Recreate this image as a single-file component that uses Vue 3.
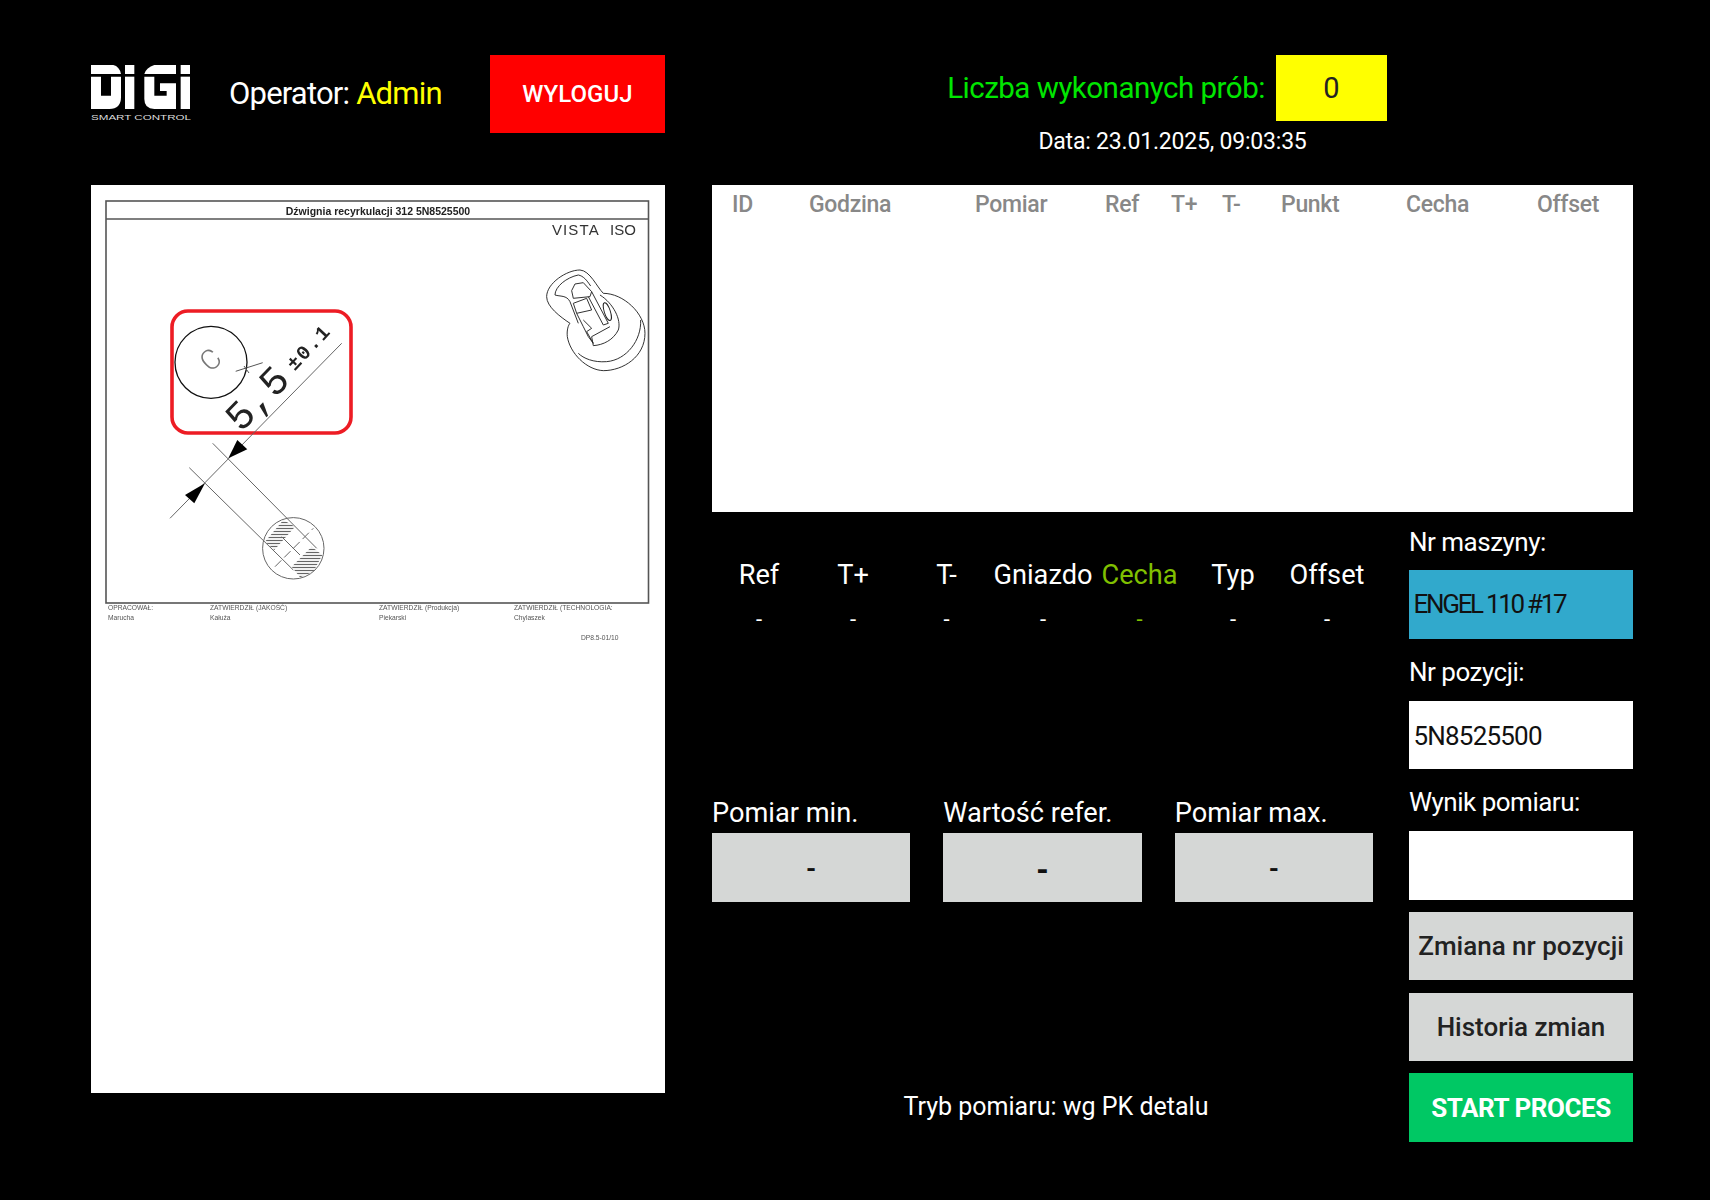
<script setup>
const tableCols = [
  { label: 'ID', w: 77 },
  { label: 'Godzina', w: 166 },
  { label: 'Pomiar', w: 130 },
  { label: 'Ref', w: 66 },
  { label: 'T+', w: 51 },
  { label: 'T-', w: 59 },
  { label: 'Punkt', w: 125 },
  { label: 'Cecha', w: 131 },
  { label: 'Offset', w: 95 }
]
const params = [
  { label: 'Ref' },
  { label: 'T+' },
  { label: 'T-' },
  { label: 'Gniazdo' },
  { label: 'Cecha', accent: true },
  { label: 'Typ' },
  { label: 'Offset' }
]
const measures = [
  { label: 'Pomiar min.' },
  { label: 'Wartość refer.', strong: true },
  { label: 'Pomiar max.' }
]
const signoffs = [
  { x: 17, role: 'OPRACOWAŁ:', name: 'Marucha' },
  { x: 119, role: 'ZATWIERDZIŁ (JAKOŚĆ)', name: 'Kałuża' },
  { x: 288, role: 'ZATWIERDZIŁ (Produkcja)', name: 'Piekarski' },
  { x: 423, role: 'ZATWIERDZIŁ (TECHNOLOGIA:', name: 'Chylaszek' }
]
</script>

<template>
  <div class="screen">
    <header class="top">
      <div class="top-left">
        <svg class="logo" viewBox="0 0 100 57" aria-label="DIGI Smart Control">
          <g fill="#fff" transform="scale(0.3333) translate(-35,-38)">
            <path d="M35 38H102Q120 42 125 65H35Z" />
            <path d="M35 73H65V130H95V73H125V135Q125 170 90 170H35Z" />
            <path d="M137 38H165V65H137Z" />
            <path d="M137 73H165V170H137Z" />
            <path d="M225 38H290V65H195Q201 45 225 38Z" />
            <path d="M195 73H225V130H262V116H242V93H290V170H225Q195 170 195 140Z" />
            <path d="M304 38H332V65H304Z" />
            <path d="M304 73H332V170H304Z" />
          </g>
          <text x="0" y="54.5" class="logo-sub" textLength="100" lengthAdjust="spacingAndGlyphs">SMART CONTROL</text>
        </svg>
        <div class="operator">Operator: <span class="yellow">Admin</span></div>
        <button class="logout">WYLOGUJ</button>
      </div>
      <div class="top-right">
        <div class="count-row">
          <span class="count-label">Liczba wykonanych prób:</span>
          <span class="count-value">0</span>
        </div>
        <div class="date">Data: 23.01.2025, 09:03:35</div>
      </div>
    </header>

    <main class="body">
      <section class="doc">
        <svg viewBox="0 0 574 908" width="574" height="908">
          <defs>
            <pattern id="hatch" width="3" height="3" patternUnits="userSpaceOnUse">
              <path d="M0 1.5H3" stroke="#666" stroke-width="1.2" />
            </pattern>
          </defs>
          <g fill="none" stroke="#555" stroke-width="1.6">
            <rect x="15" y="16" width="542.5" height="402" />
            <path d="M15 34H557.5" />
          </g>
          <text x="287" y="30" text-anchor="middle" class="doc-title">Dźwignia recyrkulacji 312 5N8525500</text>
          <text y="50" class="vista"><tspan x="461" class="vista-a">VISTA</tspan><tspan x="519">ISO</tspan></text>

          <rect x="81" y="126" width="179" height="122" rx="16" fill="none" stroke="#ed1c24" stroke-width="3.6" />
          <circle cx="120" cy="177.3" r="36" fill="none" stroke="#111" stroke-width="1.3" />
          <text class="cad-c" transform="translate(126 182) rotate(-42)" text-anchor="middle">C</text>
          <path d="M144.7 186.3L171.7 177.7M153 181L158 188" fill="none" stroke="#555" stroke-width="1" />
          <path d="M250.7 158.3L79 333.3" fill="none" stroke="#666" stroke-width="1" />
          <text class="cad-big" transform="translate(150 248) rotate(-45.5)">5,5</text>
          <text class="cad-tol" transform="translate(203.7 186.6) rotate(-47)" textLength="53" lengthAdjust="spacing">±0.1</text>
          <path d="M137.3 273.3L146.3 255L156.3 264.3Z" fill="#000" />
          <path d="M114 298.3L94 310L103.3 318.3Z" fill="#000" />

          <polygon points="174,356.7 192.3,335 204,341.7 183.3,365" fill="url(#hatch)" />
          <polygon points="200.7,381.7 220.7,361.7 231.3,370 222.3,386.7 209,392.3" fill="url(#hatch)" />
          <g fill="none" stroke="#666" stroke-width="1">
            <path d="M121.7 258.3L225.7 363.3" />
            <path d="M98.3 282.7L202.3 385" />
            <path d="M190.7 351.7L209 370" />
            <path d="M184 381.7L222.3 343.3" stroke-dasharray="9 4" />
            <circle cx="202.3" cy="363.3" r="30.7" />
          </g>

          <g fill="none" stroke="#222" stroke-width="2.8" transform="translate(279 -5) scale(0.3333)">
            <path d="M600 430C570 410 530 380 530 350C530 310 590 270 630 270C660 272 680 320 700 340" />
            <path d="M700 340C760 340 825 400 825 460C825 530 760 572 700 572C650 570 600 520 592 470C590 450 595 435 600 430" />
            <path d="M812 420C815 480 770 540 710 545C670 548 640 535 625 520" />
            <path d="M555 345C555 320 590 292 625 285C640 288 650 300 662 318" />
            <path d="M555 345C570 350 590 345 600 365L625 430" />
            <path d="M690 345C730 370 755 420 745 450C730 480 700 495 670 497" />
            <path d="M605 332L615 312L640 308L665 335L660 350L610 355Z" />
            <path d="M610 370L650 355L665 390L620 400Z" />
            <path d="M620 400L640 440L655 470L670 490L650 455L665 445L640 420" />
            <path d="M665 335L715 430L700 435L655 350" />
            <ellipse cx="712" cy="395" rx="9" ry="28" transform="rotate(-18 712 395)" />
            <path d="M670 497L665 470L720 440" />
          </g>

          <g v-for="s in signoffs" :key="s.x" class="signoff">
            <text :x="s.x" y="425">{{ s.role }}</text>
            <text :x="s.x" y="435">{{ s.name }}</text>
          </g>
          <text x="490" y="455" class="signoff-code">DP8.5-01/10</text>
        </svg>
      </section>

      <section class="work">
        <div class="table">
          <div class="thead">
            <span v-for="c in tableCols" :key="c.label" class="th" :style="{ width: c.w + 'px' }">{{ c.label }}</span>
          </div>
        </div>

        <div class="lower">
          <div class="lower-main">
            <div class="params">
              <div v-for="p in params" :key="p.label" class="param" :class="{ accent: p.accent }">
                <div class="param-label">{{ p.label }}</div>
                <div class="param-value">-</div>
              </div>
            </div>

            <div class="measures">
              <div v-for="m in measures" :key="m.label" class="measure">
                <div class="measure-label">{{ m.label }}</div>
                <div class="measure-box" :class="{ strong: m.strong }">-</div>
              </div>
            </div>

            <div class="mode">Tryb pomiaru: wg PK detalu</div>
          </div>

          <aside class="side">
            <div class="side-label first">Nr maszyny:</div>
            <div class="field blue">ENGEL 110 #17</div>
            <div class="side-label">Nr pozycji:</div>
            <div class="field white short">5N8525500</div>
            <div class="side-label">Wynik pomiaru:</div>
            <div class="field white"></div>
            <button class="btn gray">Zmiana nr pozycji</button>
            <button class="btn gray second">Historia zmian</button>
            <button class="btn green">START PROCES</button>
          </aside>
        </div>
      </section>
    </main>
  </div>
</template>

<style>
html, body { background: #000; margin: 0; }
</style>

<style scoped>
.screen {
  width: 1710px;
  height: 1200px;
  box-sizing: border-box;
  padding: 55px 77px 0 91px;
  background: #000;
  color: #fff;
  font-family: Roboto, "Liberation Sans", sans-serif;
}
.top { display: flex; height: 130px; gap: 47px; }
.top-left { width: 574px; display: flex; align-items: flex-start; }
.logo { width: 100px; height: 57px; margin-top: 10px; flex: none; }
.logo-sub { font: 400 7px "Liberation Sans", sans-serif; fill: #ddd; }
.operator { margin-left: 38px; font-size: 31px; letter-spacing: -0.8px; line-height: 66px; margin-top: 6px; white-space: nowrap; }
.yellow { color: #ff0; }
.logout {
  margin-left: auto;
  width: 175px;
  height: 78px;
  border: 0;
  padding: 0;
  background: #f00;
  color: #fff;
  font: 500 24px Roboto, sans-serif;
  letter-spacing: 0.1px;
}
.top-right { width: 921px; display: flex; flex-direction: column; align-items: center; }
.count-row { display: flex; align-items: center; gap: 11px; padding-right: 11px; }
.count-label { color: #00e600; font-size: 29.5px; letter-spacing: -0.5px; white-space: nowrap; }
.count-value {
  width: 111px;
  height: 66px;
  background: #ff0;
  color: #222;
  font-size: 29px;
  display: flex;
  align-items: center;
  justify-content: center;
}
.date { font-size: 23px; letter-spacing: -0.2px; line-height: 30px; margin-top: 6px; }

.body { display: flex; gap: 47px; }
.doc { width: 574px; height: 908px; background: #fff; flex: none; }
.doc svg { display: block; filter: blur(0.35px); }
.doc-title { font: 700 10.5px "Liberation Sans", sans-serif; fill: #222; }
.vista { font: 400 15px "Liberation Sans", sans-serif; fill: #333; }
.vista-a { letter-spacing: 1.1px; }
.cad-c { font: 300 28px Roboto, sans-serif; fill: #777; }
.cad-big { font: 400 40px "Liberation Mono", monospace; fill: #222; }
.cad-tol { font: 700 20px "Liberation Mono", monospace; fill: #222; }
.signoff text { font: 400 6.7px "Liberation Sans", sans-serif; fill: #555; }
.signoff-code { font: 400 6.7px "Liberation Sans", sans-serif; fill: #555; }

.work { width: 921px; flex: none; }
.table { height: 327px; background: #fff; }
.thead { display: flex; padding-left: 20px; height: 38px; align-items: center; }
.th { color: #888; font-size: 23px; font-weight: 500; letter-spacing: -0.3px; flex: none; }

.lower { display: flex; gap: 35px; }
.lower-main { width: 662px; flex: none; }
.params { display: grid; grid-template-columns: 94px 94px 93px 100px 93px 94px 94px; padding-top: 48px; text-align: center; }
.param-label { font-size: 27.2px; line-height: 30px; white-space: nowrap; }
.param-value { font-size: 22px; line-height: 30px; margin-top: 15px; }
.accent { color: #80c000; }

.measures { display: grid; grid-template-columns: repeat(3, 1fr); gap: 33px; width: 661px; margin-top: 162px; }
.measure-label { font-size: 27.2px; line-height: 32px; height: 36px; white-space: nowrap; }
.measure-box {
  height: 69px;
  box-sizing: border-box;
  padding-top: 3px;
  background: #d5d7d6;
  color: #111;
  font-size: 26px;
  font-weight: 700;
  display: flex;
  align-items: center;
  justify-content: center;
}
.measure-box.strong { font-weight: 900; font-size: 30px; }

.mode { margin-top: 190px; padding-left: 26px; text-align: center; font-size: 25px; line-height: 30px; }

.side { width: 224px; flex: none; display: flex; flex-direction: column; }
.side-label { height: 62px; font-size: 26px; letter-spacing: -0.5px; line-height: 66px; white-space: nowrap; }
.side-label.first { height: 58px; line-height: 60px; }
.field {
  height: 69px;
  box-sizing: border-box;
  padding-left: 4.5px;
  font-size: 26px;
  display: flex;
  align-items: center;
  color: #111;
}
.blue { background: #31a9cc; letter-spacing: -2.3px; padding-bottom: 2px; }
.white { background: #fff; letter-spacing: -0.8px; padding-top: 2px; }
.short { height: 68px; }
.btn {
  height: 68px;
  margin-top: 12px;
  border: 0;
  padding: 0;
  font: 500 26px Roboto, sans-serif;
  white-space: nowrap;
}
.second { margin-top: 13px; }
.gray { background: #d5d7d6; color: #222; }
.green { background: #00c864; color: #fff; font-weight: 700; letter-spacing: -0.45px; height: 69px; }
</style>
